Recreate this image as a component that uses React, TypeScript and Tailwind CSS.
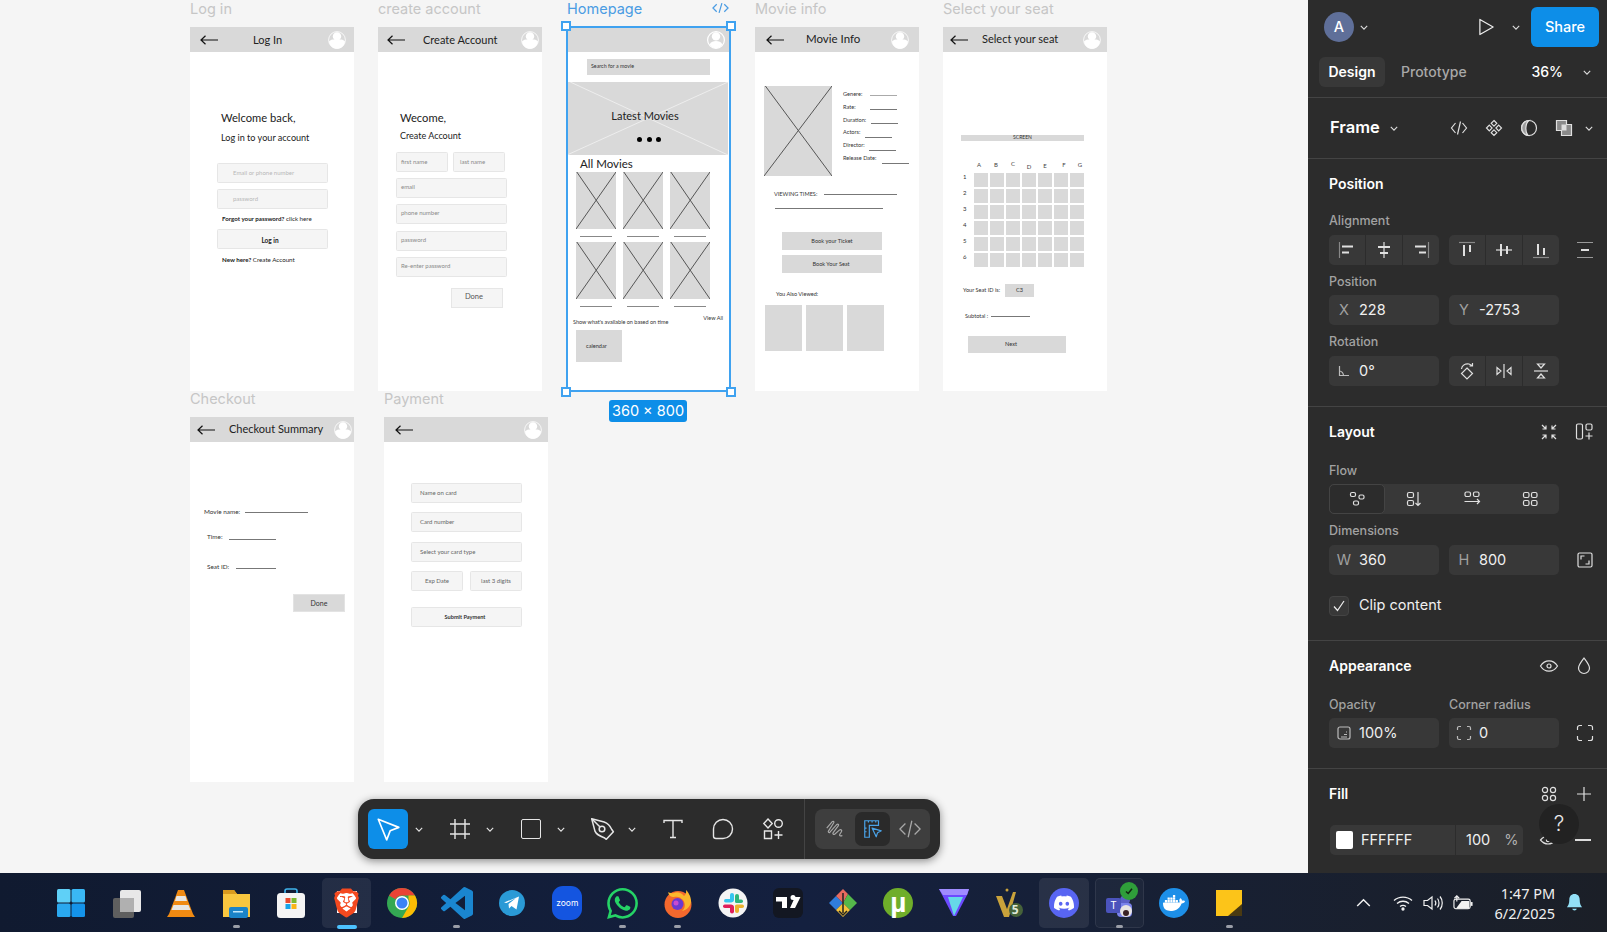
import { ReactNode } from 'react'
import { SiBrave, SiDiscord, SiDocker, SiWhatsapp } from 'react-icons/si'

const lato = 'font-["Lato","Liberation_Sans",sans-serif]'

/* ---------- wireframe bits ---------- */

function Avatar({ className = '', ring = false }: { className?: string; ring?: boolean }) {
  return (
    <svg viewBox="0 0 18 18" className={`w-[18px] h-[18px] shrink-0 ${className}`}>
      <circle cx="9" cy="9" r="8.4" fill="#d9d9d9" stroke="#fff" strokeWidth={ring ? 1.2 : 0.8} />
      <circle cx="9" cy="5.4" r="4.2" fill="#fff" />
      {ring ? (
        <path d="M2.6 13.4C3.8 11 6.400 10 9 10s5.200 1 6.400 3.400C14 15.800 11.600 17.200 9 17.200s-5-1.400-6.400-3.800z" fill="#fff" />
      ) : (
        <path d="M1 10.500C3 8 6 8.500 9 8.500s6-.5 8 2C16.500 15 13 17.800 9 17.800s-7.500-2.800-8-7.300z" fill="#fff" />
      )}
    </svg>
  )
}

function Arrow() {
  return (
    <svg viewBox="0 0 18 10" className="w-[18px] h-[10px] shrink-0">
      <path d="M18 5H1M5.5 .8 1 5l4.5 4.2" fill="none" stroke="#111" strokeWidth="1.2" />
    </svg>
  )
}

function Header({ title, className = '', titleClass = '', avatarClass = '', arrow = true, ring = false }: { title?: string; className?: string; titleClass?: string; avatarClass?: string; arrow?: boolean; ring?: boolean }) {
  return (
    <div className={`flex items-center h-[25px] bg-[#d9d9d9] ${className}`}>
      {arrow && <Arrow />}
      {title && <span className={`${lato} text-[11px] leading-[14px] text-[#222] whitespace-nowrap ${titleClass}`}>{title}</span>}
      <Avatar ring={ring} className={`ml-auto ${avatarClass}`} />
    </div>
  )
}

function Frame({ label, labelClass = 'text-[#c6c6c6]', className, children }: { label: string; labelClass?: string; className: string; children: ReactNode }) {
  return (
    <div className={`absolute w-[164px] h-[364px] bg-white ${className}`}>
      <div className={`absolute left-0 -top-[27px] text-[14.5px] leading-[18px] whitespace-nowrap font-["Inter",sans-serif] ${labelClass}`}>{label}</div>
      {children}
    </div>
  )
}

function Field({ text, className = 'w-[111px]', inner = 'pl-[4px]' }: { text: string; className?: string; inner?: string }) {
  return (
    <div className={`h-[20px] flex items-center bg-[#f5f5f5] border border-[#e6e6e6] rounded-[1.5px] text-[6px] leading-[8px] text-[#8a8a8a] whitespace-nowrap ${inner} ${className}`}>
      {text}
    </div>
  )
}

function Cross({ stroke = '#555', className = '' }: { stroke?: string; className?: string }) {
  return (
    <svg viewBox="0 0 100 100" preserveAspectRatio="none" className={`absolute inset-0 w-full h-full ${className}`}>
      <path d="M2 0 100 100M100 0 0 100" stroke={stroke} strokeWidth="1" vectorEffect="non-scaling-stroke" fill="none" />
    </svg>
  )
}

function Poster() {
  return (
    <div>
      <div className="relative w-[40px] h-[57px] bg-[#d9d9d9]">
        <Cross />
      </div>
      <div className="w-[32px] h-px bg-[#888] ml-[4px] mt-[7px]" />
    </div>
  )
}

function Rule({ className }: { className: string }) {
  return <div className={`h-px bg-[#777] ${className}`} />
}

const movieFields = [
  { label: 'Genere:', w: 'w-[27px]', line: 'mt-[5px] bg-[#aaa]' },
  { label: 'Rate:', w: 'w-[27px]', line: 'mt-[6px]' },
  { label: 'Duration:', w: 'w-[28px]', line: 'mt-[7px]' },
  { label: 'Actors:', w: 'w-[22px]', line: 'mt-[9px]' },
  { label: 'Director:', w: 'w-[26px]', line: 'mt-[9px]' },
  { label: 'Release Date:', w: 'w-[39px]', line: 'mt-[9px]' },
]

const seatCols = [
  { c: 'A', k: '-translate-x-[2px]' },
  { c: 'B', k: '-translate-x-[1px]' },
  { c: 'C', k: '-translate-y-[1px]' },
  { c: 'D', k: 'translate-y-[2px]' },
  { c: 'E', k: 'translate-y-[1px]' },
  { c: 'F', k: 'translate-x-[3px]' },
  { c: 'G', k: 'translate-x-[3px]' },
]

function Canvas() {
  return (
    <div className={`relative flex-1 bg-[#f5f5f5] overflow-hidden ${lato}`}>
      {/* Log in */}
      <Frame label="Log in" className="left-[190px] top-[27px]">
        <Header title="Log In" className="pl-[10px] gap-[35px]" avatarClass="mr-[8px]" />
        <div className="pl-[27px] text-[#222]">
          <div className="ml-[4px] mt-[59px] text-[11.2px] leading-[14px]">Welcome back,</div>
          <div className="ml-[4px] mt-[7px] text-[9.1px] leading-[12px]">Log in to your account</div>
          <Field text="Email or phone number" inner="pl-[15px] text-[#b8b8b8]" className="w-[111px] mt-[19px]" />
          <Field text="password" inner="pl-[15px] text-[#b8b8b8]" className="w-[111px] mt-[6px]" />
          <div className="ml-[5px] mt-[6px] text-[6.2px] leading-[8px] whitespace-nowrap"><b>Forgot your password?</b> click here</div>
          <div className="w-[111px] h-[20px] mt-[6px] flex items-center justify-center pr-[5px] pt-[3px] bg-[#f5f5f5] border border-[#e6e6e6] rounded-[1.5px] text-[6.5px] font-bold">Log in</div>
          <div className="ml-[5px] mt-[7px] text-[6.2px] leading-[8px] whitespace-nowrap"><b>New here?</b> Create Account</div>
        </div>
      </Frame>

      {/* create account */}
      <Frame label="create account" className="left-[378px] top-[27px]">
        <Header title="Create Account" className="pl-[9px] gap-[18px]" avatarClass="mr-[3px]" />
        <div className="pl-[18px] text-[#222]">
          <div className="ml-[4px] mt-[59px] text-[11.2px] leading-[14px]">Wecome,</div>
          <div className="ml-[4px] mt-[5px] text-[9px] leading-[12px]">Create Account</div>
          <div className="flex gap-[5px] mt-[10px]">
            <Field text="first name" className="w-[52px]" />
            <Field text="last name" className="w-[52px]" inner="pl-[6px]" />
          </div>
          <Field text="email" className="w-[111px] mt-[6px] pb-[2px]" />
          <Field text="phone number" className="w-[111px] mt-[6px] pb-[2px]" />
          <Field text="password" className="w-[111px] mt-[7px] pb-[2px]" />
          <Field text="Re-enter password" className="w-[111px] mt-[6px] pb-[2px]" />
          <div className="w-[52px] h-[20px] ml-[55px] mt-[11px] flex items-center justify-center pb-[2px] pr-[6px] bg-[#f5f5f5] border border-[#e6e6e6] text-[7.5px] text-[#555]">Done</div>
        </div>
      </Frame>

      {/* Homepage, selected */}
      <Frame label="Homepage" labelClass="text-[#4a9ce3]" className="left-[567px] top-[27px] !w-[163px]">
        <svg viewBox="0 0 18 12" className="absolute right-[1px] -top-[25px] w-[17px] h-[12px]">
          <path d="M5 2 1 6l4 4M13 2l4 4-4 4M10.5 .8 7.5 11.2" fill="none" stroke="#4a9ce3" strokeWidth="1.3" />
        </svg>
        <Header arrow={false} ring avatarClass="mr-[5px]" />
        <div className="w-[123px] h-[16px] ml-[20px] mt-[7px] pl-[4px] flex items-center bg-[#d9d9d9] text-[5.3px] text-[#333]">Search for a movie</div>
        <div className="relative w-[161px] h-[73px] mt-[7px] pt-[27px] flex flex-col items-center pr-[5px] bg-[#d9d9d9]">
          <Cross stroke="#ededed" />
          <div className="relative text-[11px] leading-[14px] text-[#222]">Latest Movies</div>
          <div className="relative flex gap-[4.5px] mt-[14px] ml-[8px]">
            <span className="w-[5px] h-[5px] rounded-full bg-black" />
            <span className="w-[5px] h-[5px] rounded-full bg-black" />
            <span className="w-[5px] h-[5px] rounded-full bg-black" />
          </div>
        </div>
        <div className="ml-[13px] mt-[2px] text-[11.5px] leading-[14px] text-[#222]">All Movies</div>
        <div className="grid grid-cols-[40px_40px_40px] gap-x-[7px] gap-y-[5px] ml-[9px] mt-px">
          <Poster /><Poster /><Poster /><Poster /><Poster /><Poster />
        </div>
        <div className="flex justify-between h-[12px] mt-[7px] pl-[6px] pr-[7px] text-[5.5px] leading-[8px] text-[#333]">
          <span className="mt-[4px] whitespace-nowrap">Show what's available on based on time</span>
          <span className="whitespace-nowrap">View All</span>
        </div>
        <div className="w-[46px] h-[32px] ml-[9px] mt-[4px] pl-[10px] flex items-center bg-[#d9d9d9] text-[5.6px] text-[#333]">calendar</div>

        <div className="absolute -inset-px border-2 border-[#3fa2f0]" />
        <span className="absolute -left-[6px] -top-[6px] w-[10px] h-[10px] bg-white border-2 border-[#3fa2f0]" />
        <span className="absolute -right-[6px] -top-[6px] w-[10px] h-[10px] bg-white border-2 border-[#3fa2f0]" />
        <span className="absolute -left-[6px] -bottom-[6px] w-[10px] h-[10px] bg-white border-2 border-[#3fa2f0]" />
        <span className="absolute -right-[6px] -bottom-[6px] w-[10px] h-[10px] bg-white border-2 border-[#3fa2f0]" />
        <div className="absolute left-[42px] -bottom-[31px] w-[78px] h-[22px] flex items-center justify-center rounded-[3px] bg-[#0d8ee8] text-white text-[14.5px] leading-[18px] font-['Inter',sans-serif]">360 × 800</div>
      </Frame>

      {/* Movie info */}
      <Frame label="Movie info" className="left-[755px] top-[27px]">
        <Header title="Movie Info" className="pl-[11px] gap-[22px]" titleClass="!text-[11.5px] mb-[2px]" avatarClass="mr-[10px]" />
        <div className="flex mt-[34px] pl-[9px]">
          <div className="relative w-[68px] h-[90px] bg-[#d9d9d9] shrink-0">
            <Cross />
          </div>
          <div className="ml-[11px] pt-[4px] text-[5.6px] text-[#333]">
            {movieFields.map((f) => (
              <div key={f.label} className="flex h-[12.8px] leading-[8px]">
                <span className={`${f.w} whitespace-nowrap`}>{f.label}</span>
                <div className={`w-[27px] h-px bg-[#777] ${f.line}`} />
              </div>
            ))}
          </div>
        </div>
        <div className="flex items-center mt-[14px] ml-[19px] text-[5.6px] leading-[8px] text-[#333]">
          <span className="w-[42px] whitespace-nowrap">VIEWING TIMES:</span>
          <Rule className="w-[73px] ml-[8px]" />
        </div>
        <Rule className="w-[108px] ml-[20px] mt-[10px]" />
        <div className="w-[100px] h-[18px] ml-[27px] mt-[23px] flex items-center justify-center bg-[#d9d9d9] text-[5.6px] text-[#333]">Book your Ticket</div>
        <div className="w-[100px] h-[18px] ml-[27px] mt-[5px] flex items-center justify-center pr-[2px] bg-[#d9d9d9] text-[5.6px] text-[#333]">Book Your Seat</div>
        <div className="ml-[21px] mt-[17px] text-[5.6px] leading-[8px] text-[#333]">You Also Viewed:</div>
        <div className="flex gap-[4px] ml-[10px] mt-[7px]">
          <div className="w-[37px] h-[46px] bg-[#d9d9d9]" />
          <div className="w-[37px] h-[46px] bg-[#d9d9d9]" />
          <div className="w-[37px] h-[46px] bg-[#d9d9d9]" />
        </div>
      </Frame>

      {/* Select your seat */}
      <Frame label="Select your seat" className="left-[943px] top-[27px]">
        <Header title="Select your seat" className="pl-[7px] gap-[14px]" titleClass="mb-[2px]" avatarClass="mr-[6px]" />
        <div className="w-[123px] h-[6px] ml-[18px] mt-[83px] flex items-center justify-center bg-[#d9d9d9] text-[5px] text-[#333]">SCREEN</div>
        <div className="flex gap-[2px] ml-[31px] mt-[20px] text-[6px] leading-[8px] text-[#444]">
          {seatCols.map((s) => (
            <span key={s.c} className={`w-[14px] text-center ${s.k}`}>{s.c}</span>
          ))}
        </div>
        <div className="flex flex-col gap-[2px] ml-[20px] mt-[4px]">
          {[1, 2, 3, 4, 5, 6].map((row) => (
            <div key={row} className="flex items-center gap-[2px]">
              <span className="w-[9px] text-[6px] leading-[8px] text-[#333] -translate-y-[3px]">{row}</span>
              {seatCols.map((s) => (
                <div key={s.c} className="w-[14px] h-[14px] bg-[#d9d9d9]" />
              ))}
            </div>
          ))}
        </div>
        <div className="flex items-center ml-[20px] mt-[17px] text-[5.6px] text-[#333]">
          <span className="w-[36px] whitespace-nowrap">Your Seat ID is:</span>
          <div className="w-[29px] h-[13px] ml-[6px] flex items-center justify-center bg-[#d9d9d9]">C3</div>
        </div>
        <div className="flex items-center ml-[22px] mt-[15px] text-[5.6px] leading-[8px] text-[#333]">
          <span className="w-[22px] whitespace-nowrap">Subtotal :</span>
          <Rule className="w-[39px] ml-[4px]" />
        </div>
        <div className="w-[98px] h-[17px] ml-[25px] mt-[16px] flex items-center justify-center pr-[12px] bg-[#d9d9d9] text-[5.6px] text-[#333]">Next</div>
      </Frame>

      {/* Checkout */}
      <Frame label="Checkout" className="left-[190px] top-[417px] !h-[365px]">
        <Header title="Checkout Summary" className="pl-[7px] gap-[14px]" titleClass="mb-[2px]" avatarClass="!-ml-[3px]" />
        <div className="flex items-center ml-[14px] mt-[66px] text-[6.4px] leading-[8px] text-[#333]">
          <span className="w-[36px] whitespace-nowrap">Movie name:</span>
          <Rule className="w-[63px] ml-[5px]" />
        </div>
        <div className="flex ml-[17px] mt-[17px] text-[6.4px] leading-[8px] text-[#333]">
          <span className="w-[15px] whitespace-nowrap">Time:</span>
          <Rule className="w-[47px] ml-[7px] mt-[6px]" />
        </div>
        <div className="flex ml-[17px] mt-[22px] text-[6.4px] leading-[8px] text-[#333]">
          <span className="w-[22px] whitespace-nowrap">Seat ID:</span>
          <Rule className="w-[40px] ml-[7px] mt-[5px]" />
        </div>
        <div className="w-[52px] h-[18px] ml-[103px] mt-[23px] flex items-center justify-center bg-[#d9d9d9] border border-[#e3e3e3] text-[7px] text-[#333]">Done</div>
      </Frame>

      {/* Payment */}
      <Frame label="Payment" className="left-[384px] top-[417px] !h-[365px]">
        <Header className="pl-[11px]" avatarClass="mr-[6px]" />
        <div className="pl-[27px]">
          <Field text="Name on card" inner="pl-[8px] !text-[#666]" className="w-[111px] mt-[41px]" />
          <Field text="Card number" inner="pl-[8px] !text-[#666]" className="w-[111px] mt-[9px]" />
          <Field text="Select your card type" inner="pl-[8px] !text-[#666]" className="w-[111px] mt-[10px]" />
          <div className="flex gap-[7px] mt-[9px]">
            <Field text="Exp Date" inner="justify-center !text-[#666]" className="w-[52px]" />
            <Field text="last 3 digits" inner="justify-center !text-[#666]" className="w-[52px]" />
          </div>
          <div className="w-[111px] h-[20px] mt-[16px] flex items-center justify-center pr-[3px] bg-[#f5f5f5] border border-[#e6e6e6] rounded-[1.5px] text-[5.6px] font-bold text-[#333]">Submit Payment</div>
        </div>
      </Frame>

      {/* Bottom toolbar */}
      <div className="absolute left-[358px] top-[799px] w-[582px] h-[60px] flex items-center rounded-[16px] bg-[#2c2c2c] shadow-[0_2px_8px_rgba(0,0,0,0.45)]">
        <div className="ml-[10px] w-[40px] h-[40px] flex items-center justify-center rounded-[6px] bg-[#0d8ee8]">
          <svg viewBox="0 0 24 24" className="w-[26px] h-[26px]" fill="none" stroke="#fff" strokeWidth="1.5" strokeLinejoin="round"><path d="M3 3l19 7.5-8 3.2L10.8 22z" /></svg>
        </div>
        <ToolChevron className="ml-[7px]" />
        <svg viewBox="0 0 24 24" className="w-[24px] h-[24px] ml-[25px]" fill="none" stroke="#e6e6e6" strokeWidth="1.4"><path d="M7 2v20M17 2v20M2 7h20M2 17h20" /></svg>
        <ToolChevron className="ml-[14px]" />
        <div className="w-[20px] h-[20px] ml-[27px] rounded-[2px] border-[1.5px] border-[#e6e6e6]" />
        <ToolChevron className="ml-[16px]" />
        <svg viewBox="0 0 24 24" className="w-[26px] h-[26px] ml-[24px]" fill="none" stroke="#e6e6e6" strokeWidth="1.4" strokeLinejoin="round"><path d="M2.5 2.5 14 5.500c3 1 5.500 3.500 7 7l1.500 2-6.500 7-2-1.500c-3-1-7-2.500-8.500-6z" /><circle cx="12" cy="12" r="2.600" /><path d="M3 3l7 7" /></svg>
        <ToolChevron className="ml-[13px]" />
        <svg viewBox="0 0 24 24" className="w-[24px] h-[24px] ml-[25px]" fill="none" stroke="#e6e6e6" strokeWidth="1.4"><path d="M3 6V3.500h18V6M12 3.500v17M9 20.500h6" /></svg>
        <svg viewBox="0 0 24 24" className="w-[24px] h-[24px] ml-[26px]" fill="none" stroke="#e6e6e6" strokeWidth="1.4"><path d="M12 2.500a9.500 9.500 0 0 1 0 19H5c-1.500 0-2.500-1-2.500-2.500v-7A9.500 9.500 0 0 1 12 2.500z" /></svg>
        <svg viewBox="0 0 24 24" className="w-[24px] h-[24px] ml-[26px]" fill="none" stroke="#e6e6e6" strokeWidth="1.4"><path d="M7 2l4.200 4.500L7 11 2.800 6.500zM3.500 14h7v7.500h-7z" /><circle cx="17.500" cy="6.500" r="3.800" /><path d="M17.500 14v8M13.500 18h8" /></svg>
        <div className="w-px h-[60px] ml-[19px] bg-[#444]" />
        <div className="ml-[10px] w-[115px] h-[40px] flex items-center rounded-[8px] bg-[#3e3e3e]">
          <div className="flex-1 flex justify-center">
            <svg viewBox="0 0 24 24" className="w-[22px] h-[22px]" fill="none" stroke="#a8a8a8" strokeWidth="1.3"><path d="M3 11 9 4c1-1 2.500 0 1.500 1.500L5 14c-1 1.500.5 2.500 1.500 1.500L14 7c1.500-1 2.500.5 1.500 1.500L10 16c-1 1.500.5 2.500 2 1.500L17 13c1.500-1 3 .5 2 2-1 1.500-2 2.500-2 3.500 0 1 1.500 1.500 3 .5" /></svg>
          </div>
          <div className="w-[35px] h-[34px] flex items-center justify-center rounded-[7px] bg-[#2a2a2a]">
            <svg viewBox="0 0 24 24" className="w-[22px] h-[22px]" fill="none" stroke="#4aa3e8" strokeWidth="1.3"><path d="M3 3h15v5H8v13H3zM7 3v2M11 3v2M15 3v2M3 11h2M3 15h2" /><path d="M11 11l10 3-4 2-1.500 4.500z" strokeLinejoin="round" /></svg>
          </div>
          <div className="flex-1 flex justify-center">
            <svg viewBox="0 0 24 24" className="w-[22px] h-[22px]" fill="none" stroke="#a8a8a8" strokeWidth="1.4"><path d="M7 6l-6 6 6 6M17 6l6 6-6 6M14 3l-4 18" /></svg>
          </div>
        </div>
      </div>
    </div>
  )
}

function ToolChevron({ className = '' }: { className?: string }) {
  return <Chevron className={`text-[#e6e6e6] ${className}`} />
}

/* ---------- right panel ---------- */

function Chevron({ className = '' }: { className?: string }) {
  return (
    <svg viewBox="0 0 10 6" className={`w-[8px] h-[5px] shrink-0 ${className}`} fill="none" stroke="currentColor" strokeWidth="1.4">
      <path d="M1 1l4 4 4-4" />
    </svg>
  )
}

function I({ children, size = 'w-[18px] h-[18px]', box = 18, stroke = '#e0e0e0', className = '' }: { children: ReactNode; size?: string; box?: number; stroke?: string; className?: string }) {
  return (
    <svg viewBox={`0 0 ${box} ${box}`} className={`${size} shrink-0 ${className}`} fill="none" stroke={stroke} strokeWidth="1.2">
      {children}
    </svg>
  )
}

function Label({ children, className = '' }: { children: ReactNode; className?: string }) {
  return <div className={`text-[12.5px] leading-[16px] font-medium text-[#a2a2a2] translate-y-px ${className}`}>{children}</div>
}

function Heading({ children }: { children: ReactNode }) {
  return <div className="text-[14px] leading-[20px] font-semibold text-white">{children}</div>
}

function Input({ prefix, value }: { prefix: ReactNode; value: string }) {
  return (
    <div className="w-[110px] h-[30px] flex items-center rounded-[5px] bg-[#383838] text-[14.5px] text-[#f0f0f0]">
      <span className="w-[30px] flex justify-center text-[#a0a0a0]">{prefix}</span>
      <span>{value}</span>
    </div>
  )
}

function Seg({ children }: { children: ReactNode }) {
  return <div className="flex w-[110px] h-[30px] rounded-[5px] bg-[#383838] divide-x divide-[#2c2c2c]">{children}</div>
}

function SegCell({ children }: { children: ReactNode }) {
  return <div className="flex-1 flex items-center justify-center">{children}</div>
}

function Panel() {
  return (
    <aside className="w-[299px] bg-[#2c2c2c] font-['Inter',sans-serif] text-white">
      <div className="h-[98px] border-b border-[#444]">
        <div className="flex items-center h-[54px] pl-[16px] pr-[8px]">
          <div className="w-[30px] h-[30px] rounded-full bg-[#5f6f99] flex items-center justify-center text-[14.5px] font-medium">A</div>
          <Chevron className="ml-[6px] text-[#ddd]" />
          <svg viewBox="0 0 18 20" className="w-[17px] h-[20px] ml-[110px]" fill="none" stroke="#eee" strokeWidth="1.3" strokeLinejoin="round"><path d="M2 2l14 8-14 8z" /></svg>
          <Chevron className="ml-[17px] text-[#ddd]" />
          <div className="w-[68px] h-[40px] ml-[11px] flex items-center justify-center rounded-[6px] bg-[#0d8ee8] text-[14.5px] font-medium">Share</div>
        </div>
        <div className="flex items-center h-[30px] mt-[3px] pl-[11px] pr-[16px] text-[14px]">
          <div className="w-[66px] h-[30px] pb-[2px] flex items-center justify-center rounded-[6px] bg-[#383838] font-semibold">Design</div>
          <span className="ml-[16px] -translate-y-px text-[#a8a8a8] font-medium">Prototype</span>
          <span className="ml-auto -translate-y-px font-medium">36%</span>
          <Chevron className="ml-[20px] text-[#ddd]" />
        </div>
      </div>

      <div className="flex items-center h-[61px] pl-[22px] pr-[14px] border-b border-[#444]">
        <span className="text-[16.5px] -translate-y-px font-semibold">Frame</span>
        <Chevron className="ml-[10px] text-[#ddd]" />
        <I className="ml-[52px]"><path d="M5.5 4 1.500 9l4 5M12.500 4l4 5-4 5M10.500 2.500 7.500 15.500" /></I>
        <I className="ml-[17px]"><path d="M9 1.500l2.800 2.800L9 7.100 6.200 4.300zM4.300 6.200l2.800 2.800-2.800 2.800L1.500 9zM13.700 6.200 16.500 9l-2.800 2.800L10.900 9zM9 10.900l2.800 2.800L9 16.500l-2.800-2.800z" /></I>
        <I className="ml-[17px]"><circle cx="9" cy="9" r="7.500" /><path d="M9 1.500a7.500 7.500 0 0 0-1 14.900c-3-3-3-12 1-14.900z" fill="#9a9a9a" /></I>
        <I className="ml-[17px]"><path d="M1.500 1.500h10v4h5v11h-10v-5h-5z" fill="#8a8a8a" /><path d="M6.500 5.500h5v6h-5z" fill="#ddd" stroke="none" /></I>
        <Chevron className="ml-[12px] text-[#ddd]" />
      </div>

      <section className="h-[248px] pl-[21px] pt-[15px] border-b border-[#444]">
        <Heading>Position</Heading>
        <Label className="mt-[18px]">Alignment</Label>
        <div className="flex gap-[10px] mt-[7px]">
          <Seg>
            <SegCell><I><path d="M1.500 1v16" stroke="#888" /><path d="M4 5.500h11M4 11.500h7" strokeWidth="2" /></I></SegCell>
            <SegCell><I><path d="M3 6h12M5 12h8" strokeWidth="2" /><path d="M9 1v16" /></I></SegCell>
            <SegCell><I><path d="M16.500 1v16" stroke="#888" /><path d="M3 5.500h11M7 11.500h7" strokeWidth="2" /></I></SegCell>
          </Seg>
          <Seg>
            <SegCell><I><path d="M1 1.500h16" stroke="#888" /><path d="M6 4v11M12 4v7" strokeWidth="2" /></I></SegCell>
            <SegCell><I><path d="M6 3v12M12 5v8" strokeWidth="2" /><path d="M1 9h16" /></I></SegCell>
            <SegCell><I><path d="M1 16.500h16" stroke="#888" /><path d="M6 3v11M12 7v7" strokeWidth="2" /></I></SegCell>
          </Seg>
          <div className="w-[32px] flex items-center justify-center">
            <I><path d="M1 1.500h16M1 16.500h16" stroke="#999" /><path d="M5 9h8" strokeWidth="2" /></I>
          </div>
        </div>
        <Label className="mt-[8px]">Position</Label>
        <div className="flex gap-[10px] mt-[6px]">
          <Input prefix="X" value="228" />
          <Input prefix="Y" value="-2753" />
        </div>
        <Label className="mt-[8px]">Rotation</Label>
        <div className="flex gap-[10px] mt-[7px]">
          <Input prefix={<I size="w-[12px] h-[12px]" box={12} stroke="#bbb"><path d="M1.500 1v9.500H11M1.500 6c2 0 4 2 4 4.500" /></I>} value="0°" />
          <Seg>
            <SegCell><I><path d="M9 6l5.500 5.500L9 17l-5.500-5.500zM3.500 7C4 3.500 7 1.500 11 2l3 1.500M14.500 1v3h-3" /></I></SegCell>
            <SegCell><I><path d="M9 2v14" /><path d="M2 5.500v7l4-3.500zM16 5.500v7l-4-3.500z" /></I></SegCell>
            <SegCell><I><path d="M2 9h14" /><path d="M5.500 2h7L9 6zM5.500 16h7L9 12z" /></I></SegCell>
          </Seg>
        </div>
      </section>

      <section className="h-[234px] pl-[21px] pt-[15px] border-b border-[#444]">
        <div className="flex items-center justify-between pr-[13px]">
          <Heading>Layout</Heading>
          <div className="flex gap-[15px]">
            <I size="w-[20px] h-[20px]" box={20}><path d="M3 3l4 4M7 3.500V7H3.500M17 3l-4 4M13 3.500V7h3.500M3 17l4-4M7 16.500V13H3.500M17 17l-4-4M13 16.500V13h3.500" /></I>
            <I size="w-[20px] h-[20px]" box={20}><rect x="2.5" y="2" width="6" height="15" rx="1.5" /><rect x="12" y="2" width="6" height="6" rx="1.5" /><path d="M15 10.500v7M11.500 14h7" /></I>
          </div>
        </div>
        <Label className="mt-[20px]">Flow</Label>
        <div className="flex w-[230px] h-[30px] mt-[6px] rounded-[5px] bg-[#383838]">
          <div className="w-[56px] flex items-center justify-center rounded-[5px] bg-[#2c2c2c] border border-[#444]">
            <I><rect x="2.5" y="2.5" width="5" height="4" rx="1.5" /><rect x="11" y="5" width="5" height="4" rx="1.5" /><rect x="5.5" y="11" width="5" height="4" rx="1.5" /></I>
          </div>
          <div className="flex-1 flex items-center justify-center">
            <I><rect x="2.5" y="2.5" width="6" height="5" rx="1.5" /><rect x="2.5" y="10.5" width="6" height="5" rx="1.5" /><path d="M13 2v13.500M10.500 13l2.500 2.500 2.500-2.500" /></I>
          </div>
          <div className="flex-1 flex items-center justify-center">
            <I><rect x="2" y="2" width="5.5" height="4.5" rx="1.5" /><rect x="10.5" y="2" width="5.5" height="4.5" rx="1.5" /><path d="M1.500 11.500H16.500M14 9l2.500 2.500L14 14" /></I>
          </div>
          <div className="flex-1 flex items-center justify-center">
            <I><rect x="2.5" y="2.5" width="5.5" height="5" rx="1.5" /><rect x="10.5" y="2.5" width="5.5" height="5" rx="1.5" /><rect x="2.5" y="10.5" width="5.5" height="5" rx="1.5" /><rect x="10.5" y="10.5" width="5.5" height="5" rx="1.5" /></I>
          </div>
        </div>
        <Label className="mt-[8px]">Dimensions</Label>
        <div className="flex gap-[10px] mt-[7px]">
          <Input prefix="W" value="360" />
          <Input prefix="H" value="800" />
          <div className="w-[32px] flex items-center justify-center">
            <I><rect x="2" y="2" width="14" height="14" rx="1.5" /><path d="M5 8.500V5h3.500M13 9.500V13H9.500" /></I>
          </div>
        </div>
        <div className="flex items-center mt-[20px]">
          <div className="w-[20px] h-[20px] flex items-center justify-center rounded-[4px] bg-[#383838] border border-[#444]">
            <svg viewBox="0 0 14 14" className="w-[14px] h-[14px]" fill="none" stroke="#eee" strokeWidth="1.2"><path d="M2 7.500l3.500 4L12 2" /></svg>
          </div>
          <span className="ml-[10px] -translate-y-px text-[14.5px] text-[#f0f0f0]">Clip content</span>
        </div>
      </section>

      <section className="h-[128px] pl-[21px] pt-[15px] border-b border-[#444]">
        <div className="flex items-center justify-between pr-[13px]">
          <Heading>Appearance</Heading>
          <div className="flex gap-[15px]">
            <I size="w-[20px] h-[20px]" box={20}><path d="M1.500 10C4 6 7 4.800 10 4.800S16 6 18.500 10C16 14 13 15.200 10 15.200S4 14 1.500 10z" /><circle cx="10" cy="10" r="2" /></I>
            <I size="w-[20px] h-[20px]" box={20}><path d="M10 2c-3 4-5.500 7-5.500 10a5.500 5.500 0 0 0 11 0C15.500 9 13 6 10 2z" /></I>
          </div>
        </div>
        <div className="flex gap-[10px] mt-[20px]">
          <Label className="w-[110px]">Opacity</Label>
          <Label>Corner radius</Label>
        </div>
        <div className="flex gap-[10px] mt-[6px]">
          <Input prefix={<I size="w-[14px] h-[14px]" box={14} stroke="#bbb"><rect x="1" y="1" width="12" height="12" rx="2" /><path d="M4 11h6M7 8.500h3M9 6h1" /></I>} value="100%" />
          <Input prefix={<I size="w-[16px] h-[16px]" box={16} stroke="#bbb"><path d="M1.500 5V3a1.500 1.500 0 0 1 1.500-1.500h2M11 1.500h2A1.500 1.500 0 0 1 14.500 3v2M14.500 11v2a1.500 1.500 0 0 1-1.500 1.500h-2M5 14.500H3A1.500 1.500 0 0 1 1.500 13v-2" /></I>} value="0" />
          <div className="w-[32px] flex items-center justify-center">
            <I><path d="M1.500 6V3.500a2 2 0 0 1 2-2H6M12 1.500h2.500a2 2 0 0 1 2 2V6M16.500 12v2.500a2 2 0 0 1-2 2H12M6 16.500H3.500a2 2 0 0 1-2-2V12" /></I>
          </div>
        </div>
      </section>

      <section className="relative h-[104px] pl-[21px] pt-[15px]">
        <div className="flex items-center justify-between pr-[13px]">
          <Heading>Fill</Heading>
          <div className="flex gap-[15px]">
            <I size="w-[20px] h-[20px]" box={20}><circle cx="6" cy="6" r="2.6" /><circle cx="14" cy="6" r="2.6" /><circle cx="6" cy="14" r="2.6" /><circle cx="14" cy="14" r="2.6" /></I>
            <I size="w-[20px] h-[20px]" box={20}><path d="M10 3v14M3 10h14" /></I>
          </div>
        </div>
        <div className="flex items-center mt-[21px]">
          <div className="w-[193px] h-[30px] flex items-center rounded-[5px] bg-[#383838] ml-px text-[14.5px] text-[#f0f0f0]">
            <div className="w-[17px] h-[18px] ml-[6px] rounded-[2px] bg-white" />
            <span className="ml-[8px] w-[94px]">FFFFFF</span>
            <div className="w-px h-[30px] bg-[#2c2c2c]" />
            <span className="ml-[10px]">100</span>
            <span className="ml-[14px] text-[#b0b0b0]">%</span>
          </div>
          <I size="w-[18px] h-[18px]" className="ml-[16px]"><path d="M1.500 9C4 6 6.500 5 9 5s5 1 7.500 4C14 12 11.500 13 9 13s-5-1-7.500-4z" /><circle cx="9" cy="9" r="1.600" /></I>
          <div className="w-[16px] h-[1.5px] ml-[18px] bg-[#ddd]" />
        </div>
        <div className="absolute left-[231px] top-[35px] w-[40px] h-[40px] flex items-center justify-center rounded-full bg-[#222] text-[21px] font-light text-[#e8e8e8]">?</div>
      </section>
    </aside>
  )
}

/* ---------- taskbar ---------- */

function Slot({ children, dot, bar, active, outlined }: { children: ReactNode; dot?: boolean; bar?: boolean; active?: boolean; outlined?: boolean }) {
  return (
    <div className="relative w-[55.2px] h-[59px] flex items-center justify-center pt-[1px]">
      {active && <div className="absolute left-[3px] right-[3px] top-[5px] bottom-[4px] rounded-[5px] bg-[#ffffff14]" />}
      {outlined && <div className="absolute left-[3px] right-[3px] top-[5px] bottom-[4px] rounded-[5px] bg-[#ffffff08] border border-[#ffffff14]" />}
      <div className="relative w-[32px] h-[32px] flex items-center justify-center">{children}</div>
      {dot && <span className="absolute left-[24px] bottom-[4px] w-[7px] h-[3px] rounded-full bg-[#9a9ea8]" />}
      {bar && <span className="absolute left-[18px] bottom-[3px] w-[20px] h-[4px] rounded-full bg-[#4cc2ff]" />}
    </div>
  )
}

function Logo({ children, box = 32 }: { children: ReactNode; box?: number }) {
  return <svg viewBox={`0 0 ${box} ${box}`} className="w-[32px] h-[32px]">{children}</svg>
}

function Taskbar() {
  return (
    <footer className="flex items-center h-[59px] pl-[43px] bg-gradient-to-r from-[#101a30] via-[#14203f] to-[#1b1f27] text-white">
      <Slot>
        <Logo>
          <rect x="2" y="2" width="13.5" height="13.5" rx="1.5" fill="#5fd0f7" />
          <rect x="16.5" y="2" width="13.5" height="13.5" rx="1.5" fill="#3ab8f5" />
          <rect x="2" y="16.5" width="13.5" height="13.5" rx="1.5" fill="#2aa8ef" />
          <rect x="16.5" y="16.5" width="13.5" height="13.5" rx="1.5" fill="#1493ea" />
        </Logo>
      </Slot>
      <Slot>
        <Logo>
          <rect x="3" y="11" width="21" height="20" rx="2" fill="#5f5f5f" />
          <rect x="10" y="3" width="21" height="22" rx="2" fill="#e8e8e8" />
          <rect x="10" y="11" width="14" height="14" fill="#b0b0b0" />
        </Logo>
      </Slot>
      <Slot>
        <Logo>
          <path d="M13 3h6l9 24 2 3H2l2-3z" fill="#f08a12" />
          <path d="M11.500 9h9l1.500 5H10zM8.500 18h15l2 5H6.500z" fill="#e8e6e2" />
        </Logo>
      </Slot>
      <Slot dot>
        <Logo>
          <path d="M3 3h11l3 4h13v23H3z" fill="#f8c63f" />
          <path d="M3 3h11l3 4H3z" fill="#d99a1e" />
          <rect x="9" y="20" width="19" height="11" rx="2" fill="#1a83c8" />
          <rect x="13" y="24" width="10" height="1.5" fill="#bfe6fa" />
        </Logo>
      </Slot>
      <Slot>
        <Logo>
          <path d="M10 7V4a2 2 0 0 1 2-2h8a2 2 0 0 1 2 2v3" fill="none" stroke="#3fb4ec" strokeWidth="1.6" />
          <rect x="2" y="6" width="28" height="25" rx="3.5" fill="#f4f4f4" />
          <rect x="10.5" y="11" width="5" height="5" fill="#ea4a2e" />
          <rect x="16.5" y="11" width="5" height="5" fill="#7cb92f" />
          <rect x="10.5" y="17" width="5" height="5" fill="#15a4ea" />
          <rect x="16.5" y="17" width="5" height="5" fill="#fbb417" />
        </Logo>
      </Slot>
      <Slot bar active>
        <div className="relative">
          <div className="absolute left-[5px] top-[4px] w-[20px] h-[22px] bg-white" />
          <SiBrave className="relative w-[29px] h-[32px] text-[#f4491f]" />
        </div>
      </Slot>
      <Slot>
        <Logo>
          <circle cx="16" cy="16" r="15" fill="#34a853" />
          <path d="M16 1a15 15 0 0 1 13 7.500H16a7.500 7.500 0 0 0-6.500 3.700L3 8.500A15 15 0 0 1 16 1z" fill="#ea4335" />
          <path d="M29 8.500A15 15 0 0 1 16 31l6.500-11.200a7.500 7.500 0 0 0 0-7.500V8.500z" fill="#fbbc04" />
          <circle cx="16" cy="16" r="7" fill="#fff" />
          <circle cx="16" cy="16" r="5.5" fill="#3b82f6" />
        </Logo>
      </Slot>
      <Slot dot>
        <svg viewBox="0 0 24 24" className="w-[32px] h-[32px]">
          <path fill="#1a86d0" d="M23.150 2.587L18.210.21a1.494 1.494 0 0 0-1.705.29l-9.460 8.630-4.120-3.128a.999.999 0 0 0-1.276.057L.327 7.261A1 1 0 0 0 .326 8.740L3.899 12 .326 15.260a1 1 0 0 0 .001 1.479L1.650 17.940a.999.999 0 0 0 1.276.057l4.120-3.128 9.460 8.630a1.492 1.492 0 0 0 1.704.29l4.942-2.377A1.500 1.500 0 0 0 24 20.060V3.939a1.500 1.500 0 0 0-.850-1.352zm-5.146 14.861L10.826 12l7.178-5.448v10.896z" />
        </svg>
      </Slot>
      <Slot>
        <Logo>
          <circle cx="16" cy="16" r="13" fill="#2a9ad6" />
          <path d="M8 15.500 23 9.500l-2.500 13-5-3.500-2.500 2.500-.5-4.500 7.500-6-9.500 5z" fill="#fff" />
        </Logo>
      </Slot>
      <Slot>
        <div className="w-[30px] h-[34px] flex items-center justify-center rounded-[11px] bg-[#1455e0] text-[8.5px] text-white font-['Inter',sans-serif]">zoom</div>
      </Slot>
      <Slot dot>
        <SiWhatsapp className="w-[31px] h-[31px] text-[#25d366]" />
      </Slot>
      <Slot dot>
        <Logo>
          <circle cx="16" cy="17.5" r="13.5" fill="#f4682d" />
          <path d="M6 5c1 4 3 5 6 5 4-1 6 0 9 3 3 4 2 9-1 11 5-1 9-5 9-10 0-5-3-9-5-11 .5 3-.5 5-2 6C20 6 15 4 12 6 10 6.500 7 6 6 5z" fill="#fbb72c" />
          <circle cx="15.5" cy="17" r="6" fill="#6b3ad0" />
          <circle cx="14" cy="16" r="2.5" fill="#c94bd0" />
        </Logo>
      </Slot>
      <Slot>
        <Logo>
          <circle cx="16" cy="16" r="14.5" fill="#f4f4f4" />
          <rect x="13" y="6" width="4" height="9" rx="2" fill="#36c5f0" />
          <rect x="7" y="12" width="9" height="3.5" rx="1.75" fill="#36c5f0" />
          <rect x="18" y="7" width="4" height="9" rx="2" fill="#2eb67d" />
          <rect x="18" y="12.5" width="8" height="3.5" rx="1.75" fill="#2eb67d" />
          <rect x="18" y="17.5" width="9" height="3.5" rx="1.75" fill="#ecb22e" />
          <rect x="18" y="18" width="4" height="8" rx="2" fill="#ecb22e" />
          <rect x="13" y="18" width="4" height="8.5" rx="2" fill="#e01e5a" />
          <rect x="6" y="17.5" width="10" height="3.5" rx="1.75" fill="#e01e5a" />
        </Logo>
      </Slot>
      <Slot>
        <Logo>
          <rect x="1" y="1" width="30" height="30" rx="6" fill="#131722" />
          <path d="M4 10h11v11h-5v-6.500H4zM21 13a2.500 2.500 0 1 1 0-5 2.500 2.500 0 0 1 0 5zM23 10h5.500L23 21h-5z" fill="#fff" />
        </Logo>
      </Slot>
      <Slot>
        <Logo>
          <path d="M16 16 2 16l7-7z" fill="#2f7ddc" />
          <path d="M2 16l7 7 7-7z" fill="#2f7ddc" />
          <path d="M9 9l7-7 5 5-5 9z" fill="#e86a5e" />
          <path d="M21 7l9 9-7 7-7-7z" fill="#55b84a" />
          <path d="M16 16l7 7-7 7-7-7z" fill="#f5c33b" />
          <path d="M16 6v20M12 24l4 4 4-4" stroke="#222" strokeWidth="1.5" fill="none" />
        </Logo>
      </Slot>
      <Slot>
        <div className="w-[30px] h-[30px] flex items-center justify-center rounded-full bg-[#6fae2a] text-[28px] leading-none font-bold text-white font-['Liberation_Sans',sans-serif]">µ</div>
      </Slot>
      <Slot>
        <Logo>
          <path d="M1 2h30l-2 6-11 21h-3z" fill="#6d4aff" />
          <path d="M10 10h15l-9 19z" fill="#66d9e8" />
          <path d="M1 2h30l-2 6H5z" fill="#a08cff" />
        </Logo>
      </Slot>
      <Slot>
        <Logo>
          <path d="M3 9h6l5 13 6-17h3l-7 25h-5z" fill="#c9a23b" />
          <circle cx="14" cy="3" r="1.5" fill="#c9a23b" />
          <circle cx="23" cy="23" r="7" fill="#46623a" />
        </Logo>
        <span className="absolute left-[19px] top-[14px] text-[12px] font-bold text-[#dfe8d8]">5</span>
      </Slot>
      <Slot active>
        <div className="w-[30px] h-[30px] flex items-center justify-center rounded-full bg-[#5865f2]">
          <SiDiscord className="w-[20px] h-[20px] text-white" />
        </div>
      </Slot>
      <Slot dot outlined>
        <Logo>
          <circle cx="22" cy="13" r="5" fill="#5b5fc7" />
          <rect x="14" y="16" width="15" height="14" rx="4" fill="#7b83eb" />
          <rect x="3" y="11" width="15" height="15" rx="2" fill="#4b53bc" />
          <text x="10.5" y="22" textAnchor="middle" fontSize="10" fill="#fff" fontFamily="Inter, sans-serif">T</text>
          <circle cx="23" cy="24" r="6" fill="#e8e4e4" />
          <circle cx="23" cy="26" r="3" fill="#3a2226" />
        </Logo>
        <div className="absolute -right-[3px] -top-[5px] w-[18px] h-[18px] flex items-center justify-center rounded-full bg-[#2f9e3a]">
          <svg viewBox="0 0 10 10" className="w-[10px] h-[10px]" fill="none" stroke="#10240f" strokeWidth="1.5"><path d="M2 5.500 4.200 7.500 8 2.800" /></svg>
        </div>
      </Slot>
      <Slot>
        <div className="w-[30px] h-[30px] flex items-center justify-center rounded-full bg-[#1d8fe8]">
          <SiDocker className="w-[22px] h-[22px] text-white" />
        </div>
      </Slot>
      <Slot dot>
        <Logo>
          <path d="M2 3h26v26H2z" fill="#fcc419" />
          <path d="M14 29 28 17v12z" fill="#4a3a12" />
        </Logo>
      </Slot>

      <div className="ml-[91px] flex items-center h-full font-['Noto_Sans',sans-serif]">
        <div className="w-[30px] flex justify-center">
          <svg viewBox="0 0 16 10" className="w-[15px] h-[9px]" fill="none" stroke="#f2f2f2" strokeWidth="1.6"><path d="M1 9l7-7 7 7" /></svg>
        </div>
        <div className="w-[30px] ml-[10px] flex justify-center">
          <svg viewBox="0 0 20 16" className="w-[20px] h-[16px]" fill="none" stroke="#f2f2f2" strokeWidth="1.3">
            <path d="M1 5.500C6 1 14 1 19 5.500M4 8.500c3.500-3 8.500-3 12 0M7 11.500c2-1.500 4-1.500 6 0" />
            <circle cx="10" cy="14" r="1" fill="#f2f2f2" />
          </svg>
        </div>
        <div className="w-[30px] flex justify-center">
          <svg viewBox="0 0 20 16" className="w-[20px] h-[16px]" fill="none" stroke="#f2f2f2" strokeWidth="1.2">
            <path d="M1 5.500h3.500L9 2v12L4.500 10.500H1zM12 5.500c1 1.500 1 3.500 0 5M14.500 3.500c2 2.500 2 6.500 0 9M17 1.500c3 3.500 3 9.500 0 13" />
          </svg>
        </div>
        <div className="w-[30px] flex justify-center">
          <svg viewBox="0 0 22 16" className="w-[21px] h-[16px]" fill="none" stroke="#f2f2f2" strokeWidth="1.2">
            <rect x="1" y="4" width="17" height="10" rx="2" />
            <path d="M19.500 7v4" strokeWidth="2" />
            <path d="M3 14l6-8h8v8z" fill="#f2f2f2" stroke="none" />
            <path d="M4 .5v6M1.500 3 4 .5 6.500 3" />
          </svg>
        </div>
        <div className="w-[77px] text-right text-[14.5px] leading-[20px] text-[#f0f0f0] whitespace-nowrap">
          <div>1:47 PM</div>
          <div>6/2/2025</div>
        </div>
        <div className="w-[38px] flex justify-center">
          <svg viewBox="0 0 18 20" className="w-[17px] h-[20px]" fill="#93e0f7"><path d="M9 .5c-3.500 0-5.500 2.500-5.500 6 0 4-1 6-2.500 8h16c-1.500-2-2.500-4-2.500-8 0-3.500-2-6-5.500-6zM6.500 16a2.600 2.600 0 0 0 5 0z" /></svg>
        </div>
      </div>
    </footer>
  )
}

export default function App() {
  return (
    <div className="w-[1607px] h-[932px] flex flex-col overflow-hidden">
      <div className="flex h-[873px]">
        <Canvas />
        <Panel />
      </div>
      <Taskbar />
    </div>
  )
}
